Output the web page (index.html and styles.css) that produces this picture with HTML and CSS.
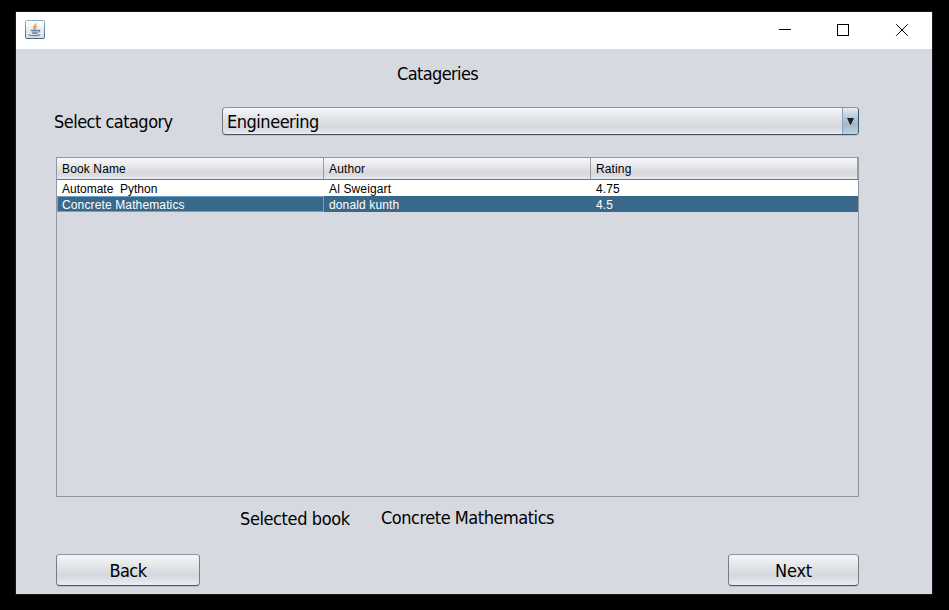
FILE: index.html
```html
<!DOCTYPE html>
<html lang="en">
<head>
<meta charset="utf-8">
<title>Catageries</title>
<link rel="stylesheet" href="styles.css">
</head>
<body>
<div class="window">
  <header class="titlebar">
    <svg class="app-icon" width="20" height="19" viewBox="0 0 20 19">
      <defs><linearGradient id="g" x1="0" y1="0" x2="0" y2="1"><stop offset="0" stop-color="#fff"/><stop offset="1" stop-color="#d9dde0"/></linearGradient>
      <linearGradient id="b" x1="0" y1="0" x2="0" y2="1"><stop offset="0" stop-color="#94afc2"/><stop offset="1" stop-color="#49657d"/></linearGradient></defs>
      <rect x=".5" y=".5" width="19" height="18" rx="1.3" fill="url(#g)" stroke="url(#b)"/>
      <path d="M9.7 9.3C6.5 6.8 12 5.8 10.6 3.4M10.6 9.3C9.4 8 10.4 7.2 12 6.2" fill="none" stroke="#f19a50" stroke-width="1.5"/>
      <path d="M5.6 10.4h7.8M6.6 12h6M7.3 13.4h4.8M13.2 10.2c2.4-.6 1.9 1.9-.5 2.3" fill="none" stroke="#6384a1" stroke-width="1.2"/>
      <path d="M4 14.4c-.8 1.5 9.5 1.6 11.2.1" fill="none" stroke="#6384a1" stroke-width="1.2"/>
    </svg>
    <svg class="controls" width="130" height="12" viewBox="0 0 130 12" fill="none" stroke="#000">
      <path d="M0 5.5h12" shape-rendering="crispEdges"/>
      <rect x="58.5" y=".5" width="11" height="11" shape-rendering="crispEdges"/>
      <path d="M117.3.3l11.4 11.4M128.7.3L117.3 11.7"/>
    </svg>
  </header>
  <main class="content">
    <h1 class="title"><span class="t-title">Catageries</span></h1>
    <div class="picker">
      <label class="t-select">Select catagory</label>
      <div class="combo">
        <span class="value t-value">Engineering</span>
        <span class="arrow"><svg width="7" height="7" viewBox="0 0 7 7"><path d="M0 0h7L4 6.5H3z" fill="#222"/></svg></span>
      </div>
    </div>
    <div class="table">
      <div class="row head"><span>Book Name</span><span>Author</span><span>Rating</span></div>
      <div class="row"><span class="c-auto">Automate&nbsp; Python</span><span>Al Sweigart</span><span>4.75</span></div>
      <div class="row selected"><span class="focus">Concrete Mathematics</span><span>donald kunth</span><span>4.5</span></div>
    </div>
    <div class="summary"><span class="t-selected">Selected book</span><span class="t-chosen">Concrete Mathematics</span></div>
    <div class="actions">
      <button class="btn back"><span class="t-back">Back</span></button>
      <button class="btn next"><span class="t-next">Next</span></button>
    </div>
  </main>
</div>
</body>
</html>
```
FILE: styles.css
```css
* { box-sizing: border-box; }
body {
  margin: 0;
  height: 610px;
  padding: 12px 17px 16px 16px;
  background: #000;
  overflow: hidden;
  color: #000;
  font: 18px/22px "DejaVu Sans Condensed", "DejaVu Sans", sans-serif;
  font-stretch: condensed;
  white-space: nowrap;
}
.window { height: 582px; background: #d6d9e0; box-shadow: 0 0 0 1px #19191b; }
.titlebar {
  height: 37px;
  padding: 0 24px 0 9px;
  background: #fff;
  display: flex;
  justify-content: space-between;
  align-items: flex-start;
}
.app-icon { margin-top: 8px; }
.controls { margin: 12px -1px 0 0; }
.content { padding: 14px 73px 0 40px; }
.title { margin: 0 0 22px 341px; font-size: 18px; font-weight: 400; line-height: 22px; }
.t-title { letter-spacing: -0.62px; }
.t-select { letter-spacing: -0.53px; }
.t-value { letter-spacing: -0.48px; }
.t-selected { letter-spacing: -0.4px; }
.t-chosen { letter-spacing: -0.47px; }
.t-back { letter-spacing: -0.55px; }
.t-next { letter-spacing: -0.2px; }
.picker { display: flex; height: 28px; }
.picker label { width: 168px; margin-left: -2px; padding-top: 4px; }
.combo {
  flex: 1;
  display: flex;
  border: 1px solid;
  border-color: #8f929b #33556f #4d5260 #737780;
  border-radius: 4px;
  background: linear-gradient(#f8f8fa, #e3e5e8 35%, #d5d8dc 75%, #e8ecf4);
  box-shadow: 0 1px 0 #bfc2c8;
  overflow: hidden;
}
.value { flex: 1; padding: 3px 0 0 4px; }
.arrow {
  width: 16px;
  padding: 10px 0 0 4px;
  border-left: 1px solid #8ba2b4;
  background: linear-gradient(#e5edf3, #b9cbd9 35%, #a2b9cb 65%, #bdd4e8);
  line-height: 0;
}
.table {
  margin-top: 22px;
  height: 340px;
  border: 1px solid #9297a1;
  font: 12px/18px "Liberation Sans", Arial, sans-serif;
  letter-spacing: 0.13px;
}
.row { display: grid; grid-template-columns: 267px 267px 267px; height: 16px; background: #fff; }
.row span { padding-left: 5px; }
.row .c-auto { letter-spacing: 0; }
.head {
  height: 22px;
  line-height: 23px;
  border-bottom: 1px solid #70747d;
  background: linear-gradient(#f8f8fa, #e3e4e8 45%, #d6d8dd 75%, #e7eaf1);
}
.head span { height: 21px; border-right: 1px solid #999ca4; }
.selected { background: #39698a; color: #fff; }
.row .focus { height: 16px; border: 1px solid #6ea0cd; padding-left: 4px; line-height: 16px; }
.summary { display: flex; margin: 10px 0 0 184px; height: 24px; }
.t-selected { width: 141px; padding-top: 1px; }
.actions { display: flex; justify-content: space-between; margin-top: 23px; }
.btn {
  height: 32px;
  padding: 2px 0 0;
  border: 1px solid;
  border-color: #92959d #777b84 #4f535c #777b84;
  border-radius: 4px;
  background: linear-gradient(#f5f6f8, #e2e4e7 38%, #d5d8dd 68%, #e9edf5);
  box-shadow: 0 1px 0 #bfc2c8;
  font: inherit;
  line-height: 28px;
  color: #000;
}
.back { width: 144px; }
.next { width: 131px; }
```
